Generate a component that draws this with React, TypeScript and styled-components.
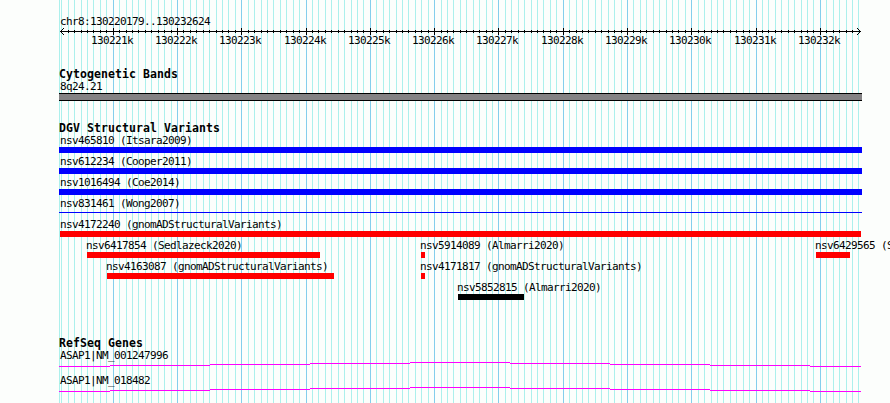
import React from 'react';
import styled, { createGlobalStyle } from 'styled-components';

const GlobalStyle = createGlobalStyle`
  body {
    margin: 0;
    background: #fcfefc;
    overflow: hidden;
  }
`;

const LEFT = 59;
const RIGHT = 862;
// pixel position of 130221k and the width of 100 bases
const FIRST_MAJOR = 113.25;
const STEP = 6.4278;

const lines = Array.from({ length: 125 }, (_, i) => {
  const n = i - 8;
  return { x: Math.floor(FIRST_MAJOR + STEP * n), major: n % 10 === 0 };
});
const majors = lines.filter(l => l.major);

const Browser = styled.main`
  position: relative;
  width: 890px;
  height: 403px;
  overflow: hidden;
  color: #000;
  font-family: 'DejaVu Sans Mono', 'Liberation Mono', monospace;
`;

const Backdrop = styled.svg`
  position: absolute;
  top: 0;
  left: 0;
  shape-rendering: crispEdges;
`;

const Panel = styled.div`
  position: relative;
  display: flex;
  flex-direction: column;
  padding-top: 15px;
`;

const Label = styled.div<{ $indent?: number }>`
  height: 13px;
  padding-left: ${props => props.$indent ?? 1}px;
  font-size: 11px;
  line-height: 13px;
  letter-spacing: -0.622px;
  white-space: pre;
`;

const Drawing = styled.svg`
  display: block;
  shape-rendering: crispEdges;
`;

const Ruler = styled.header`
  height: 53px;

  ${Label} {
    margin-left: ${LEFT}px;
  }
`;

const TickLabels = styled.div`
  display: grid;
  margin-top: -1px;

  ${Label} {
    grid-area: 1 / 1;
  }
`;

const TickLabel = styled(Label)<{ $x: number }>`
  && {
    margin-left: ${props => props.$x - 23}px;
  }
`;

const Track = styled.section<{ $height: number }>`
  height: ${props => props.$height}px;
`;

const Title = styled.h2`
  height: 12px;
  margin: 0 0 0 ${LEFT}px;
  font-size: 11.5px;
  font-weight: bold;
  line-height: 13px;
  letter-spacing: 0.077px;
  white-space: pre;
`;

const Lane = styled.div<{ $height: number }>`
  display: grid;
  height: ${props => props.$height}px;
  align-items: start;
`;

const Feature = styled.div<{ $x: number }>`
  grid-area: 1 / 1;
  margin-left: ${props => props.$x - 1}px;
`;

const Bar = styled.div<{ $width: number; $color: string; $inset?: number; $thin?: boolean }>`
  width: ${props => props.$width}px;
  height: ${props => (props.$thin ? 1 : 6)}px;
  margin-top: ${props => (props.$thin ? 2 : 0)}px;
  margin-left: ${props => props.$inset ?? 1}px;
  background: ${props => props.$color};
`;

const Band = styled.div`
  width: ${RIGHT - LEFT}px;
  height: 6px;
  margin-left: ${LEFT}px;
  border: solid #000;
  border-width: 1px 0;
  background: #848284;
`;

const BLUE = '#0000ff';
const RED = '#ff0000';

interface Variant {
  name: string;
  start: number;
  end: number;
  color: string;
  inset?: number;
  thin?: boolean;
}

const wide = { start: 60, end: 863, color: BLUE, inset: 0 };

const lanes: Variant[][] = [
  [{ name: 'nsv465810 (Itsara2009)', ...wide }],
  [{ name: 'nsv612234 (Cooper2011)', ...wide }],
  [{ name: 'nsv1016494 (Coe2014)', ...wide }],
  [{ name: 'nsv831461 (Wong2007)', ...wide, thin: true }],
  [{ name: 'nsv4172240 (gnomADStructuralVariants)', start: 60, end: 861, color: RED }],
  [
    { name: 'nsv6417854 (Sedlazeck2020)', start: 87, end: 320, color: RED },
    { name: 'nsv5914089 (Almarri2020)', start: 421, end: 425, color: RED },
    { name: 'nsv6429565 (Sedlazeck2020)', start: 816, end: 850, color: RED },
  ],
  [
    { name: 'nsv4163087 (gnomADStructuralVariants)', start: 107, end: 334, color: RED },
    { name: 'nsv4171817 (gnomADStructuralVariants)', start: 421, end: 425, color: RED },
  ],
  [{ name: 'nsv5852815 (Almarri2020)', start: 458, end: 524, color: '#000' }],
];

const genes = ['ASAP1|NM_001247996', 'ASAP1|NM_018482'];

// the intron line climbs one pixel per step to the middle and goes down again
const intron = [
  [59, 110, 4],
  [110, 210, 3],
  [210, 310, 2],
  [310, 410, 1],
  [410, 510, 0],
  [510, 610, 1],
  [610, 710, 2],
  [710, 810, 3],
  [810, 861, 4],
];

const Grid = () => (
  <Backdrop width="890" height="403">
    <rect x={LEFT} y="0" width="1" height="403" fill="#acf0ec" />
    {lines.map(({ x, major }) => (
      <rect key={x} x={x} y="0" width="1" height="403" fill={major ? '#84ceec' : '#acf0ec'} />
    ))}
  </Backdrop>
);

const Axis = () => (
  <Drawing width="890" height="7">
    <rect x="60" y="3" width="801" height="1" />
    {lines
      .filter(({ x }) => x > 64 && x < 857)
      .map(({ x, major }) => (
        <rect key={x} x={x} y={major ? 0 : 2} width="1" height={major ? 7 : 3} />
      ))}
    {[1, 2, 3].map(d => (
      <React.Fragment key={d}>
        <rect x={60 + d} y={3 - d} width="1" height="1" />
        <rect x={60 + d} y={3 + d} width="1" height="1" />
        <rect x={860 - d} y={3 - d} width="1" height="1" />
        <rect x={860 - d} y={3 + d} width="1" height="1" />
      </React.Fragment>
    ))}
  </Drawing>
);

const App: React.FC = () => (
  <Browser>
    <GlobalStyle />
    <Grid />
    <Panel>
      <Ruler>
        <Label>chr8:130220179..130232624</Label>
        <Axis />
        <TickLabels>
          {majors.map(({ x }, i) => (
            <TickLabel key={x} $x={x}>{`${130221 + i}k`}</TickLabel>
          ))}
        </TickLabels>
      </Ruler>

      <Track $height={54}>
        <Title>Cytogenetic Bands</Title>
        <Feature $x={LEFT + 1}>
          <Label>8q24.21</Label>
        </Feature>
        <Band />
      </Track>

      <Track $height={215}>
        <Title>DGV Structural Variants</Title>
        {lanes.map((lane, i) => (
          <Lane key={i} $height={21}>
            {lane.map(({ name, start, end, color, inset, thin }) => (
              <Feature key={name} $x={start}>
                <Label $indent={start > 60 ? 0 : 1}>{name}</Label>
                <Bar $width={end - start} $color={color} $inset={inset} $thin={thin} />
              </Feature>
            ))}
          </Lane>
        ))}
      </Track>

      <Track $height={66}>
        <Title>RefSeq Genes</Title>
        {genes.map(gene => (
          <Lane key={gene} $height={25}>
            <div>
              <Feature $x={LEFT + 1}>
                <Label>{gene}</Label>
              </Feature>
              <Drawing width="890" height="5">
                {intron.map(([from, to, y]) => (
                  <rect key={from} x={from} y={y} width={to - from} height="1" fill="#ff00ff" />
                ))}
              </Drawing>
            </div>
          </Lane>
        ))}
      </Track>
    </Panel>
  </Browser>
);

export default App;
